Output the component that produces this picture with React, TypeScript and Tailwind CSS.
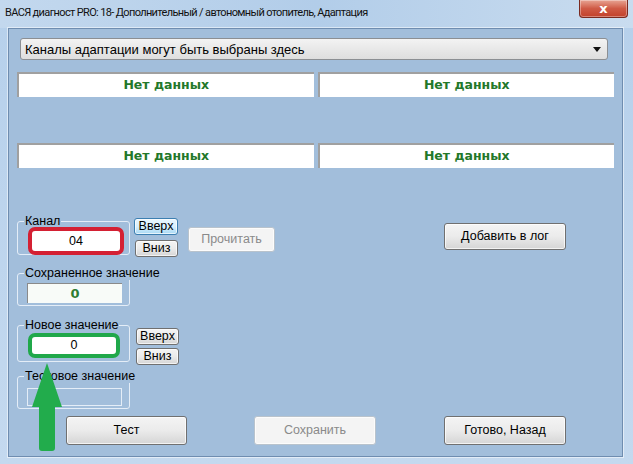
import React from 'react';

const sans = { fontFamily: '"Liberation Sans", Arial, sans-serif' };

function WinButton({
  label,
  className = '',
  disabled = false,
  focused = false,
}: {
  label: string;
  className?: string;
  disabled?: boolean;
  focused?: boolean;
}) {
  const tone = disabled
    ? 'border-[#b9c3cc] bg-[#f4f4f4] text-[#8a8a8a]'
    : focused
      ? 'border-[#3c7fb1] bg-gradient-to-b from-[#eaf6fd] via-[#d9f0fc] to-[#a7d9f5] text-black'
      : 'border-[#707070] bg-gradient-to-b from-[#f4f4f4] via-[#ebebeb] to-[#d5d5d5] text-black';
  return (
    <button
      className={`flex shrink-0 items-center justify-center rounded-[3px] border text-[12.5px] leading-none shadow-[inset_0_0_0_1px_rgba(255,255,255,0.7)] ${tone} ${className}`}
    >
      {label}
    </button>
  );
}

function Group({
  title,
  className = '',
  children,
}: {
  title: string;
  className?: string;
  children: React.ReactNode;
}) {
  return (
    <fieldset className={`min-w-0 shrink-0 rounded-[3px] border border-[#e4edf7] px-[9px] ${className}`}>
      <legend className="ml-[-3px] whitespace-nowrap px-[1px] text-[12.5px] leading-[14px] text-black">{title}</legend>
      {children}
    </fieldset>
  );
}

function NoData() {
  return (
    <div className="flex h-[25px] items-center justify-center border-l-2 border-t-2 border-[#a0a0a0] bg-white">
      <span
        className="text-[12.5px] font-bold text-[#23782a]"
        style={{ fontFamily: '"DejaVu Sans", Tahoma, sans-serif' }}
      >
        Нет данных
      </span>
    </div>
  );
}

export default function App() {
  return (
    <div
      className="relative flex h-[464px] w-[633px] flex-col overflow-hidden bg-gradient-to-b from-[#b6d0eb] to-[#c4d9ef]"
      style={sans}
    >
      {/* title bar */}
      <div className="flex h-[28px] shrink-0 items-start justify-between bg-gradient-to-r from-[#c3d8ee] via-[#b2cde9] to-[#c9dcef]">
        <span
          className="whitespace-nowrap pl-[5px] pt-[6px] text-[11px] leading-[14px] text-[#111]"
          style={{ fontFamily: 'Roboto, "Noto Sans", sans-serif', letterSpacing: '-0.65px' }}
        >
          ВАСЯ диагност PRO: 18- Дополнительный / автономный отопитель, Адаптация
        </span>
        <div className="mr-[5px] flex h-[18px] w-[49px] items-center justify-center rounded-b-[4px] border border-t-0 border-[#7a2a20] bg-gradient-to-b from-[#e7a493] via-[#cf5a45] to-[#c2412b] shadow-[inset_0_0_0_1px_rgba(255,255,255,0.35)]">
          <span className="text-[13px] font-bold leading-none text-white" style={{ fontFamily: '"DejaVu Sans", sans-serif' }}>
            x
          </span>
        </div>
      </div>

      {/* frame + client */}
      <div className="flex flex-1 px-[8px] pb-[7px] pr-[10px]">
        <div className="relative flex flex-1 flex-col border border-[#6f8db0] bg-[#a2bedb] shadow-[0_0_0_1px_rgba(255,255,255,0.5)]">
          {/* dropdown */}
          <div className="ml-[11px] mt-[9px] flex h-[22px] w-[588px] items-center justify-between rounded-[3px] border border-[#8c8f93] bg-gradient-to-b from-[#f3f3f3] to-[#dedede] pl-[4px] pr-[6px]">
            <span className="text-[13px] leading-none text-black">Каналы адаптации могут быть выбраны здесь</span>
            <svg width="8" height="5" viewBox="0 0 8 5">
              <path d="M0 0h8L4 5z" fill="#111" />
            </svg>
          </div>

          {/* data boxes */}
          <div className="ml-[8px] mt-[12px] grid w-[597px] grid-cols-2 gap-x-[4px] gap-y-[46px]">
            <NoData />
            <NoData />
            <NoData />
            <NoData />
          </div>

          {/* controls */}
          <div className="ml-[8px] mt-[46px] flex flex-col">
            {/* channel */}
            <div className="flex h-[46px] items-start">
              <Group title="Канал" className="h-[41px] w-[113px]">
                <div className="ml-[1px] mt-[-1px] flex h-[28px] w-[96px] items-center justify-center rounded-[7px] border-[4px] border-[#d42033] bg-white text-[12.5px]">
                  04
                </div>
              </Group>
              <div className="ml-[4px] mt-[4px] flex flex-col gap-[5px]">
                <WinButton label="Вверх" focused className="h-[17px] w-[44px]" />
                <WinButton label="Вниз" className="ml-[1px] h-[17px] w-[43px]" />
              </div>
              <WinButton label="Прочитать" disabled className="ml-[10px] mt-[13px] h-[25px] w-[87px]" />
              <WinButton label="Добавить в лог" className="ml-[169px] mt-[9px] h-[27px] w-[122px]" />
            </div>

            {/* saved value */}
            <div className="mt-[6px] flex h-[52px] items-start">
              <Group title="Сохраненное значение" className="h-[40px] w-[113px]">
                <div className="mt-[3px] flex h-[20px] w-[95px] items-center justify-center border-l border-t border-[#8a8a8a] bg-[#f8fbf8]">
                  <span className="text-[13px] font-bold text-[#2e7d32]" style={{ fontFamily: '"DejaVu Sans", Tahoma, sans-serif' }}>
                    0
                  </span>
                </div>
              </Group>
            </div>

            {/* new value */}
            <div className="flex h-[51px] items-start">
              <Group title="Новое значение" className="h-[44px] w-[113px]">
                <div className="ml-[1px] mt-[1px] flex h-[25px] w-[92px] items-center justify-center rounded-[7px] border-[4px] border-[#20a84a] bg-white text-[12.5px]">
                  0
                </div>
              </Group>
              <div className="ml-[6px] mt-[10px] flex flex-col gap-[3px]">
                <WinButton label="Вверх" className="h-[17px] w-[43px]" />
                <WinButton label="Вниз" className="h-[17px] w-[43px]" />
              </div>
            </div>

            {/* test value */}
            <div className="flex h-[47px] items-start">
              <Group title="Тестовое значение" className="h-[40px] w-[113px]">
                <div className="mt-[5px] h-[18px] w-[95px] border border-[#e4edf7]" />
              </Group>
            </div>

            {/* bottom buttons */}
            <div className="flex items-start">
              <WinButton label="Тест" className="ml-[49px] h-[29px] w-[121px]" />
              <WinButton label="Сохранить" disabled className="ml-[67px] h-[29px] w-[122px]" />
              <WinButton label="Готово, Назад" className="ml-[68px] h-[29px] w-[122px]" />
            </div>
          </div>

          {/* annotation arrow */}
          <svg className="absolute left-[23px] top-[334px]" width="32" height="90" viewBox="0 0 32 90">
            <path d="M15 0 L30 44 L23 44 L23 85 Q23 88 20 88 L10 88 Q7 88 7 85 L7 44 L0 44 Z" fill="#22ac4c" />
          </svg>
        </div>
      </div>
    </div>
  );
}
